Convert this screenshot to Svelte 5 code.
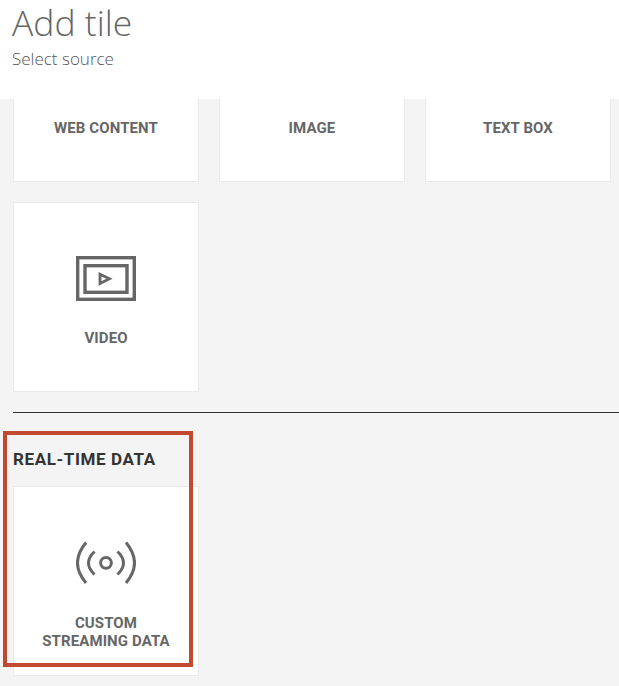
<script>
  const topTiles = ["WEB CONTENT", "IMAGE", "TEXT BOX"];
</script>

<div class="page">
  <header class="header">
    <h1>Add tile</h1>
    <p>Select source</p>
  </header>

  <div class="content">
    <div class="grid">
      {#each topTiles as label}
        <div class="tile cut"><span class="label">{label}</span></div>
      {/each}
      <div class="tile">
        <svg class="icon" width="60" height="45" viewBox="0 0 60 45" fill="none" stroke="#666" stroke-width="3.4">
          <rect x="1.7" y="1.7" width="56.6" height="41.6" />
          <rect x="9" y="9.7" width="42" height="26.6" />
          <path d="M24 18.2 L33.4 22.8 L24 27.4 Z" stroke-width="2.8" />
        </svg>
        <span class="label">VIDEO</span>
      </div>
    </div>

    <hr />

    <h2>REAL-TIME DATA</h2>

    <div class="grid">
      <div class="tile">
        <svg class="icon" width="60" height="45" viewBox="0 0 60 45" fill="none" stroke="#666" stroke-width="3">
          <circle cx="30" cy="22.8" r="5.4" />
          <path d="M18.5 11.5 Q6.5 23 18.5 34.5" />
          <path d="M41.5 11.5 Q53.5 23 41.5 34.5" />
          <path d="M10 2.5 Q-7 23 10 43" />
          <path d="M50 2.5 Q67 23 50 43" />
        </svg>
        <span class="label two">CUSTOM<br />STREAMING DATA</span>
      </div>
    </div>

    <div class="callout"></div>
  </div>
</div>

<style>
  :global(body) {
    margin: 0;
    background: #f4f4f4;
  }

  .page {
    width: 619px;
    height: 686px;
    overflow: hidden;
    font-family: "Open Sans", "Liberation Sans", sans-serif;
  }

  .header {
    height: 99px;
    box-sizing: border-box;
    padding: 2px 12px 0;
    background: #fff;
    color: #666;
  }

  h1 {
    margin: 0;
    font-size: 35.5px;
    line-height: 40px;
    font-weight: 300;
  }

  .header p {
    margin: 6px 0 0;
    font-size: 17px;
    line-height: 22px;
    font-weight: 300;
    color: #555;
  }

  .content {
    position: relative;
    padding-left: 13px;
  }

  .grid {
    display: grid;
    grid-template-columns: repeat(3, 186px);
    gap: 20px;
  }

  .tile {
    height: 190px;
    box-sizing: border-box;
    border: 1px solid #eaeaea;
    background: #fff;
    display: flex;
    flex-direction: column;
    align-items: center;
    padding-top: 53px;
    text-align: center;
  }

  .tile.cut {
    height: 83px;
    border-top: 0;
    padding-top: 20px;
  }

  .icon {
    flex: none;
    margin-bottom: 28px;
  }

  .label {
    font-family: Roboto, "Liberation Sans", sans-serif;
    font-size: 15px;
    line-height: 18px;
    font-weight: 700;
    letter-spacing: 0.1px;
    color: #666;
  }

  .label.two {
    margin-top: 1px;
  }

  hr {
    margin: 20px 0 0;
    border: 0;
    height: 1px;
    background: #333;
  }

  h2 {
    margin: 35px 0 16px;
    font-family: Roboto, "Liberation Sans", sans-serif;
    font-size: 17px;
    line-height: 22px;
    font-weight: 700;
    letter-spacing: 0.6px;
    color: #333;
  }

  .callout {
    position: absolute;
    left: 3px;
    top: 332px;
    width: 190px;
    height: 236px;
    box-sizing: border-box;
    border: 4px solid #c0492f;
  }
</style>
